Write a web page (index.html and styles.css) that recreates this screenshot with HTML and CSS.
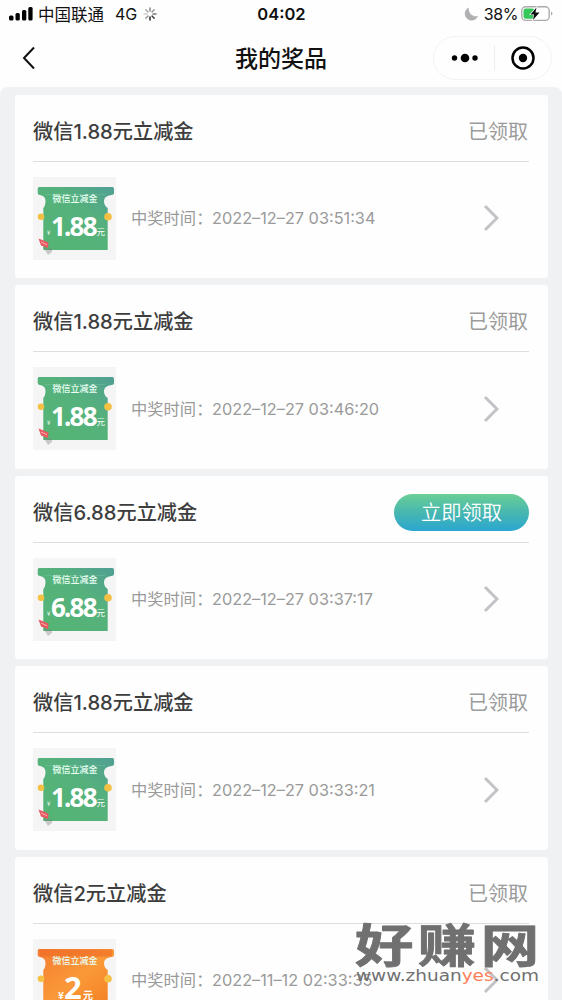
FILE: index.html
```html
<!DOCTYPE html>
<html lang="zh-CN">
<head>
<meta charset="utf-8">
<title>我的奖品</title>
<link rel="stylesheet" href="styles.css">
</head>
<body>
<svg class="defs" width="0" height="0" aria-hidden="true">
  <defs>
    <linearGradient id="green" x1="0" y1="1" x2="1" y2="0"><stop offset="0" stop-color="#54b573"/><stop offset=".6" stop-color="#55b17c"/><stop offset="1" stop-color="#509f94"/></linearGradient>
    <linearGradient id="orange" x1="0" y1="0" x2="1" y2="1"><stop offset="0" stop-color="#f57c31"/><stop offset=".5" stop-color="#fa9938"/><stop offset="1" stop-color="#f27b22"/></linearGradient>
    <path id="ticket" d="M6 10Q4.700 10 4.700 12V16Q4.700 18 7 18Q12.500 19 12.500 24Q12.500 29 10.300 31V73H74.700V31Q71 29 71 24Q71 19 78.500 18Q81 18 81 16V12Q81 10 79.500 10Z"/>
    <g id="trim">
      <circle cx="8" cy="39.700" r="3.300" fill="#f4c144"/><circle cx="75" cy="39.700" r="3.800" fill="#f4c144"/>
      <path d="M10 70L19 71.500V75L15 78Z" fill="#777" opacity=".35"/>
      <path d="M5.500 61.500L15.500 65.500L15 71L8 68.500Z" fill="#e85860"/><path d="M8 65L14 67.700" stroke="#f6c5c8" stroke-width=".8"/>
    </g>
    <g id="chevron"><path d="M2 2L14 14L2 26" fill="none" stroke="#c2c3c6" stroke-width="3"/></g>
  </defs>
</svg>
<div class="screen">
  <header class="top">
    <div class="status">
      <div class="carrier">
        <svg width="24" height="14" viewBox="0 0 24 14"><rect y="8.500" width="4.500" height="5" rx="1.500"/><rect x="6.500" y="6" width="4.300" height="7.500" rx="1.500"/><rect x="13" y="3" width="4.300" height="10.500" rx="1.500"/><rect x="19.300" width="4.300" height="13.500" rx="1.500"/></svg>
        <span class="operator">中国联通</span><span class="network">4G</span>
        <svg class="spinner" width="14" height="14" viewBox="-7 -7 14 14" stroke-width="1.500" stroke-linecap="round"><path d="M0-3V-6" stroke="#888"/><path d="M2.100-2.100L4.200-4.200" stroke="#999"/><path d="M3 0H6" stroke="#777"/><path d="M2.100 2.100L4.200 4.200" stroke="#444"/><path d="M0 3V6" stroke="#222"/><path d="M-2.100 2.100L-4.200 4.200" stroke="#999"/><path d="M-3 0H-6" stroke="#ccc"/><path d="M-2.100-2.100L-4.200-4.200" stroke="#aaa"/></svg>
      </div>
      <time class="clock">04:02</time>
      <div class="power">
        <svg width="14" height="14" viewBox="0 0 14 14"><path d="M4.500 1A6.500 6.500 0 1 0 13.500 9.500A7.500 7.500 0 0 1 4.500 1Z" fill="#b0b0b2" stroke="#b0b0b2" stroke-width=".8"/></svg>
        <span class="percent">38%</span>
        <svg width="33" height="16" viewBox="0 0 33 16"><rect x=".8" y=".8" width="27.400" height="13.600" rx="4" fill="#fff" stroke="#aaa" stroke-width="1.400"/><rect x="2.500" y="2.500" width="11" height="10.200" rx="2.200" fill="#35c759"/><path d="M30 5.500Q33 7.500 30 9.500Z" fill="#aaa"/><path d="M15.500 1.500L9.500 8.500H13L12 14L18.500 6.500H14.500Z" fill="#111" stroke="#fff" stroke-width="1.200" paint-order="stroke"/></svg>
      </div>
    </div>
    <div class="nav">
      <svg class="back" width="14" height="24" viewBox="0 0 14 24"><path d="M12 1.500L2 12L12 22.500" fill="none" stroke="#111" stroke-width="2"/></svg>
      <h1 class="title">我的奖品</h1>
      <div class="capsule">
        <svg width="28" height="12" viewBox="0 0 28 12"><circle cx="3.500" cy="6" r="2.700"/><circle cx="14" cy="6" r="4.300"/><circle cx="24" cy="6" r="2.700"/></svg>
        <i class="split"></i>
        <svg width="26" height="26" viewBox="0 0 26 26"><circle cx="13" cy="13" r="10.500" fill="none" stroke="#000" stroke-width="2.500"/><circle cx="13" cy="13" r="4.200"/></svg>
      </div>
    </div>
  </header>
  <main class="list">
    <section class="card">
      <div class="head"><h2 class="name">微信1.88元立减金</h2><span class="state">已领取</span></div>
      <div class="detail">
        <svg class="coupon" viewBox="0 0 83 83"><use href="#ticket" fill="url(#green)"/><use href="#trim"/><path class="band" d="M12 17.500H72"/><text class="label" x="42" y="24.500">微信立减金</text><text class="unit" x="14" y="58">¥</text><text class="amount" x="18" y="58.500">1.88</text><text class="unit yuan" x="63.500" y="58">元</text></svg>
        <span class="when">中奖时间：</span><time class="date">2022–12–27 03:51:34</time>
        <svg class="go" viewBox="0 0 16 28"><use href="#chevron"/></svg>
      </div>
    </section>
    <section class="card">
      <div class="head"><h2 class="name">微信1.88元立减金</h2><span class="state">已领取</span></div>
      <div class="detail">
        <svg class="coupon" viewBox="0 0 83 83"><use href="#ticket" fill="url(#green)"/><use href="#trim"/><path class="band" d="M12 17.500H72"/><text class="label" x="42" y="24.500">微信立减金</text><text class="unit" x="14" y="58">¥</text><text class="amount" x="18" y="58.500">1.88</text><text class="unit yuan" x="63.500" y="58">元</text></svg>
        <span class="when">中奖时间：</span><time class="date">2022–12–27 03:46:20</time>
        <svg class="go" viewBox="0 0 16 28"><use href="#chevron"/></svg>
      </div>
    </section>
    <section class="card">
      <div class="head"><h2 class="name">微信6.88元立减金</h2><button class="claim">立即领取</button></div>
      <div class="detail">
        <svg class="coupon" viewBox="0 0 83 83"><use href="#ticket" fill="url(#green)"/><use href="#trim"/><path class="band" d="M12 17.500H72"/><text class="label" x="42" y="24.500">微信立减金</text><text class="unit" x="14" y="58">¥</text><text class="amount" x="18" y="58.500">6.88</text><text class="unit yuan" x="63.500" y="58">元</text></svg>
        <span class="when">中奖时间：</span><time class="date">2022–12–27 03:37:17</time>
        <svg class="go" viewBox="0 0 16 28"><use href="#chevron"/></svg>
      </div>
    </section>
    <section class="card">
      <div class="head"><h2 class="name">微信1.88元立减金</h2><span class="state">已领取</span></div>
      <div class="detail">
        <svg class="coupon" viewBox="0 0 83 83"><use href="#ticket" fill="url(#green)"/><use href="#trim"/><path class="band" d="M12 17.500H72"/><text class="label" x="42" y="24.500">微信立减金</text><text class="unit" x="14" y="58">¥</text><text class="amount" x="18" y="58.500">1.88</text><text class="unit yuan" x="63.500" y="58">元</text></svg>
        <span class="when">中奖时间：</span><time class="date">2022–12–27 03:33:21</time>
        <svg class="go" viewBox="0 0 16 28"><use href="#chevron"/></svg>
      </div>
    </section>
    <section class="card">
      <div class="head"><h2 class="name">微信2元立减金</h2><span class="state">已领取</span></div>
      <div class="detail">
        <svg class="coupon" viewBox="0 0 83 83"><use href="#ticket" fill="url(#orange)"/><use href="#trim"/><path class="band warm" d="M7 14H79"/><text class="label" x="42" y="24.500">微信立减金</text><text class="unit big" x="25" y="60">¥</text><text class="amount two" x="31" y="60">2</text><text class="unit big" x="50" y="60">元</text></svg>
        <span class="when">中奖时间：</span><time class="date">2022–11–12 02:33:35</time>
        <svg class="go" viewBox="0 0 16 28"><use href="#chevron"/></svg>
      </div>
    </section>
  </main>
  <svg class="watermark" width="190" height="70" viewBox="0 0 190 70">
    <text class="brand" transform="scale(1.27 1)" x="0" y="43">好赚网</text>
    <text class="site" x="1" y="61.500" textLength="183" lengthAdjust="spacingAndGlyphs">www.zhuan<tspan class="yes">yes</tspan>.com</text>
  </svg>
</div>
</body>
</html>
```
FILE: styles.css
```css
* { box-sizing: border-box; }
body { margin: 0; background: #f0f1f3; font-family: Inter, "Noto Sans CJK SC", sans-serif; }
h1, h2 { margin: 0; }
.defs { position: absolute; }
.screen { position: relative; width: 562px; height: 1000px; overflow: hidden; background: #fefefe; }
.top { height: 87px; color: #111; }
.status { height: 29px; padding: 0 8px 0 9px; display: grid; grid-template-columns: 1fr auto 1fr; align-items: center; }
.carrier, .power { display: flex; align-items: center; }
.carrier { padding-bottom: 1px; }
.operator { font-size: 16.500px; margin-left: 5px; line-height: 24px; padding-top: 1px; }
.network { font-size: 16px; margin-left: 11px; }
.spinner { margin-left: 6px; fill: none; }
.clock { font-size: 16.500px; font-weight: 600; padding-bottom: 1px; }
.power { justify-content: flex-end; padding-bottom: 1px; }
.percent { font-size: 16px; margin: 0 3px 0 6px; letter-spacing: -.4px; }
.nav { height: 58px; display: grid; grid-template-columns: 1fr auto 1fr; align-items: center; padding-bottom: 1px; }
.back { margin-left: 22px; }
.title { font-size: 23px; font-weight: 500; line-height: 34px; padding-top: 2px; }
.capsule { justify-self: end; margin-right: 10px; width: 119px; height: 44px; border: 1px solid #f3f3f3; border-radius: 22px; display: flex; align-items: center; padding: 0 15px 0 17px; justify-content: space-between; }
.split { width: 1px; height: 26px; background: #eee; }
.list { min-height: 913px; padding: 7.500px 14px 0 15px; display: flex; flex-direction: column; gap: 7px; background: #f0f1f3; border-radius: 8px 8px 0 0; }
.card { height: 183.500px; flex: none; padding: 0 19px 0 18px; background: #fefefe; border-radius: 3px; }
.head { height: 67px; display: flex; align-items: center; justify-content: space-between; border-bottom: 1px solid #dedede; padding-top: 8px; }
.name { font-size: 20.200px; line-height: 30px; font-weight: 500; color: #3d3d3d; white-space: nowrap; }
.state { font-size: 20px; line-height: 30px; margin-right: 1px; color: #9b9b9b; }
.claim { width: 135px; height: 37px; margin-bottom: 1px; padding: 0 0 2px; border: 0; border-radius: 19px; color: #fff; font: 350 20.300px "Noto Sans CJK SC", sans-serif; background: linear-gradient(#6bcf96, #4ab9ad 45%, #2ba6d0); }
.detail { height: 113px; display: flex; align-items: center; padding-right: 30px; }
.coupon { width: 83px; height: 83px; background: #f5f5f6; flex: none; }
.when { width: 80px; margin-left: 15px; font-size: 16.300px; color: #9a9a9a; white-space: nowrap; line-height: 24px; }
.date { margin-left: 1px; font-size: 16.300px; color: #9a9a9a; white-space: nowrap; }
.go { width: 16px; height: 28px; margin-left: auto; }
.band { fill: none; stroke: #8fd0b8; stroke-width: .6; opacity: .5; }
.warm { stroke: #ee6b26; stroke-width: 7; opacity: .6; }
.label { font: 500 9px "Noto Sans CJK SC"; fill: #e9fff4; text-anchor: middle; }
.amount { font: 700 26px "Noto Sans"; fill: #fff; letter-spacing: -1.800px; }
.two { font-size: 31px; }
.unit { font: 6px "Noto Sans CJK SC"; fill: #fff; }
.yuan { font-size: 8.500px; }
.big { font-size: 10px; font-weight: 700; }
.watermark { position: absolute; left: 355px; top: 919px; }
.brand { font: 700 46px "Noto Sans CJK SC"; letter-spacing: 3.500px; fill: #707070; stroke: #707070; stroke-width: .8; stroke-linejoin: round; }
.site { font: 15px "DejaVu Sans"; fill: #707070; }
.yes { fill: #ff8058; }
```
